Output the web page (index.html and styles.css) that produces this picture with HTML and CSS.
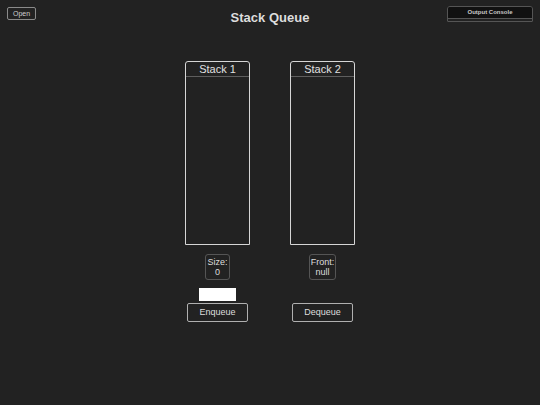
FILE: index.html
```html
<!DOCTYPE html>
<html>
<head>
<meta charset="utf-8">
<link rel="stylesheet" href="styles.css">
</head>
<body>
<div class="page">
  <header class="topbar">
    <div class="left"><button class="open-btn">Open</button></div>
    <h1 class="title">Stack Queue</h1>
    <div class="right">
      <div class="console">
        <div class="console-head">Output Console</div>
        <div class="console-body"></div>
      </div>
    </div>
  </header>
  <main class="board">
    <div class="stack">
      <div class="stack-head">Stack 1</div>
      <div class="stack-body"></div>
    </div>
    <div class="stack">
      <div class="stack-head">Stack 2</div>
      <div class="stack-body"></div>
    </div>
    <div class="cell"><div class="info">Size:<br>0</div></div>
    <div class="cell"><div class="info">Front:<br>null</div></div>
    <div class="cell"><input class="entry" type="text"></div>
    <div class="cell"></div>
    <div class="cell"><button class="action">Enqueue</button></div>
    <div class="cell"><button class="action">Dequeue</button></div>
  </main>
</div>
</body>
</html>
```
FILE: styles.css
```css
html, body {
  margin: 0;
  padding: 0;
  background: #222222;
  font-family: "Liberation Sans", Arial, sans-serif;
  color: #dddddd;
}
.page {
  width: 540px;
  height: 405px;
}
.topbar {
  display: grid;
  grid-template-columns: 1fr auto 1fr;
  align-items: start;
  height: 55px;
}
.left {
  padding: 7px 0 0 7px;
}
.open-btn {
  display: block;
  width: 29px;
  height: 13px;
  padding: 0;
  margin: 0;
  background: #222;
  border: 1px solid #8a8a8a;
  border-radius: 2px;
  color: #cfcfcf;
  font-family: "Liberation Sans", Arial, sans-serif;
  font-size: 7px;
  line-height: 11px;
}
.title {
  margin: 0;
  padding-top: 10px;
  font-size: 13px;
  line-height: 16px;
  font-weight: bold;
  color: #dddddd;
  text-align: center;
}
.right {
  display: flex;
  justify-content: flex-end;
  padding: 6px 7px 0 0;
}
.console {
  width: 86px;
  height: 16px;
  box-sizing: border-box;
  border: 1px solid #555;
  border-radius: 3px 3px 1px 1px;
  background: #222;
  display: flex;
  flex-direction: column;
  overflow: hidden;
}
.console-head {
  height: 11px;
  background: #111;
  border-bottom: 1px solid #555;
  font-size: 6px;
  font-weight: bold;
  line-height: 10px;
  text-align: center;
  color: #c8c8c8;
}
.console-body {
  flex: 1;
}
.board {
  display: grid;
  grid-template-columns: 65px 65px;
  column-gap: 40px;
  justify-content: center;
  padding-top: 6px;
}
.stack {
  height: 184px;
  box-sizing: border-box;
  border: 1px solid #d6d6d6;
  border-radius: 3px 3px 0 0;
  display: flex;
  flex-direction: column;
}
.stack-head {
  height: 14px;
  border-bottom: 1px solid #5e5e5e;
  font-size: 11px;
  line-height: 14px;
  text-align: center;
  color: #e0e0e0;
}
.cell {
  display: flex;
  justify-content: center;
}
.info {
  margin-top: 9px;
  padding: 2px 1px;
  border: 1px solid #555;
  border-radius: 3px;
  font-size: 9px;
  line-height: 10px;
  text-align: center;
  color: #dddddd;
}
.entry {
  display: block;
  box-sizing: border-box;
  margin: 8px 0 0 0;
  width: 37px;
  height: 13px;
  padding: 0;
  border: none;
  background: #ffffff;
}
.action {
  display: block;
  margin: 2px 0 0 0;
  width: 61px;
  height: 19px;
  padding: 0;
  box-sizing: border-box;
  background: #222;
  border: 1px solid #b0b0b0;
  border-radius: 2px;
  color: #dddddd;
  font-family: "Liberation Sans", Arial, sans-serif;
  font-size: 9px;
  line-height: 17px;
}
```
